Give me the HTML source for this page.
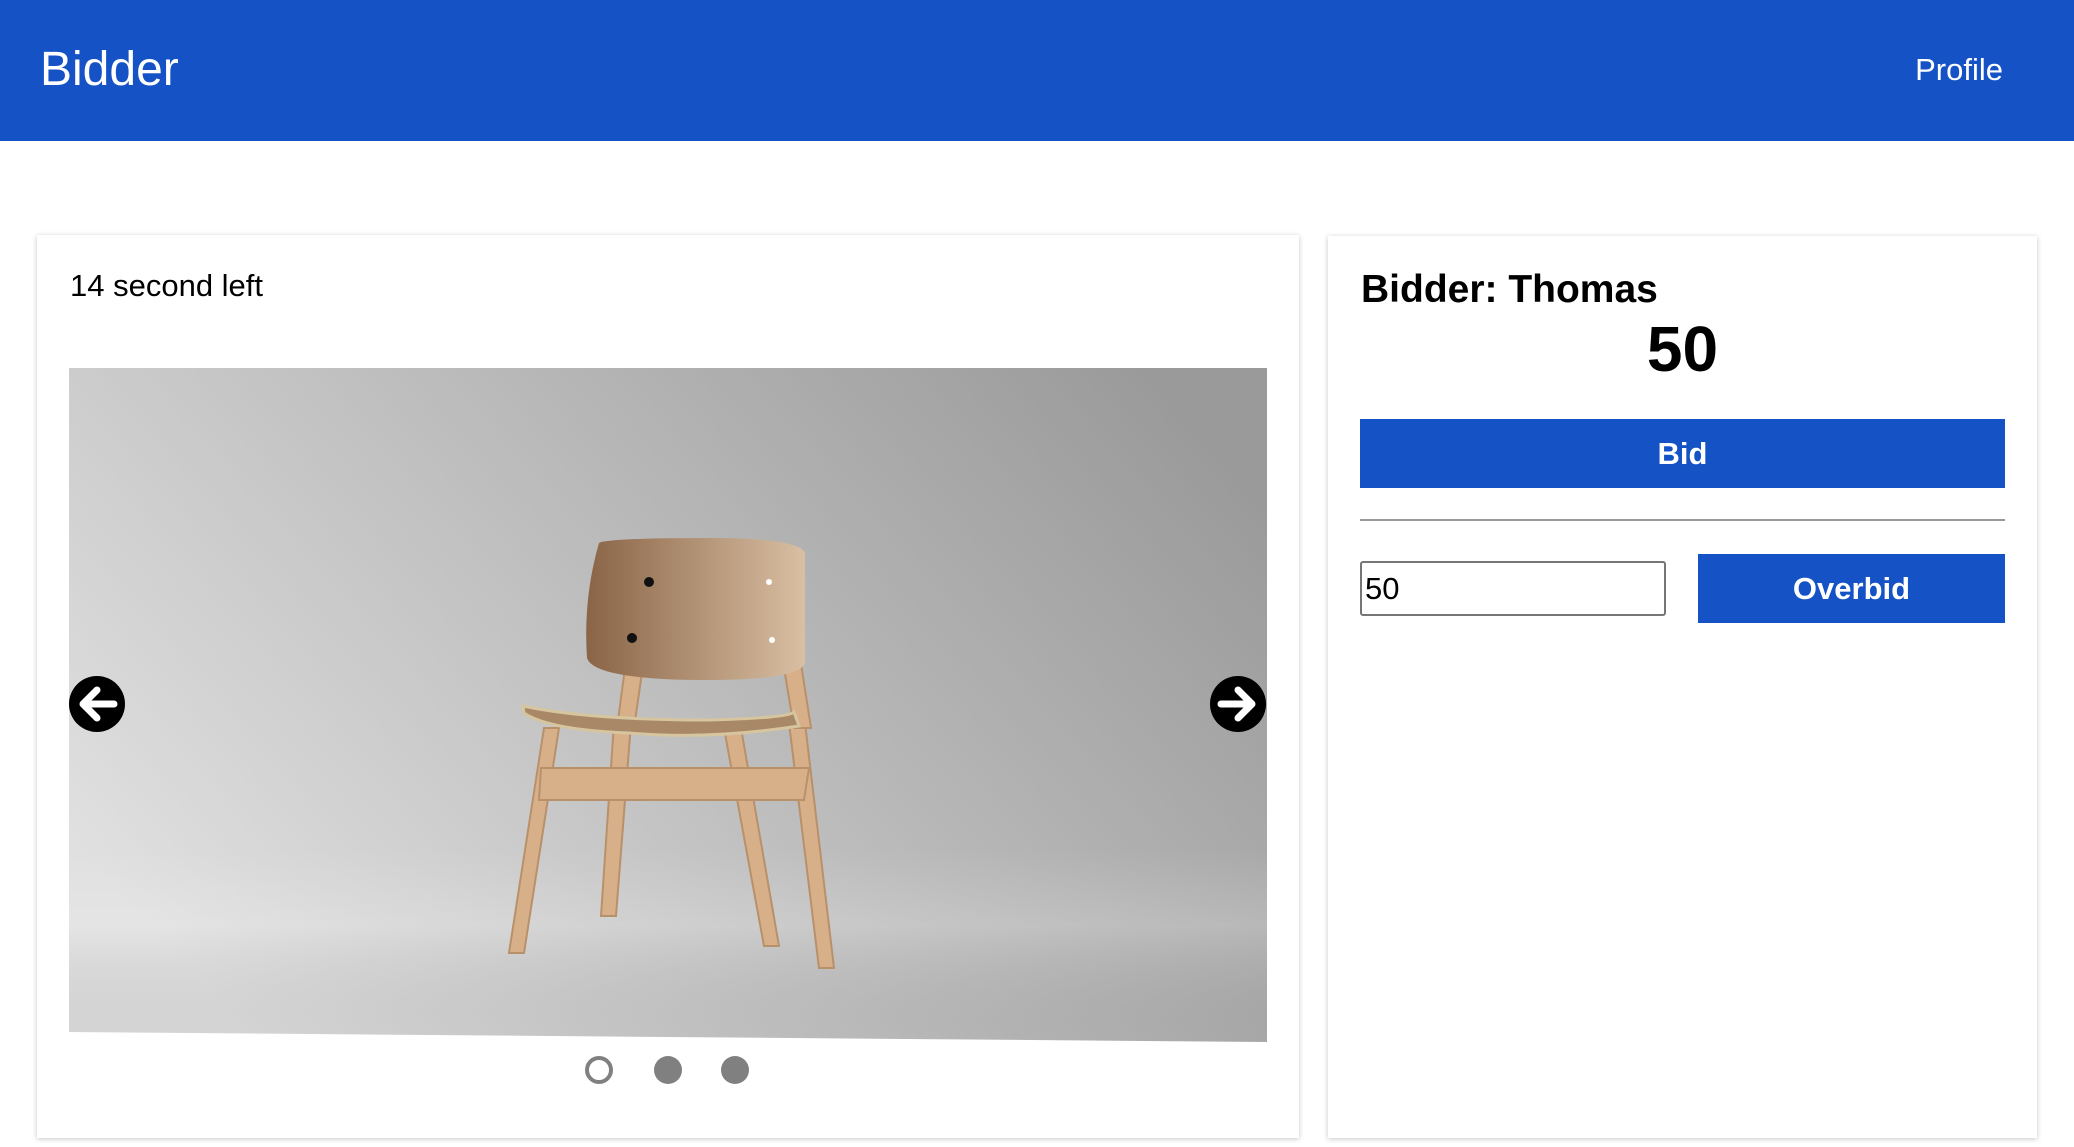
<!DOCTYPE html>
<html><head><style>
*{margin:0;padding:0;box-sizing:border-box}
body{width:2074px;height:1147px;background:#fff;font-family:"Liberation Sans",Arial,sans-serif;position:relative;overflow:hidden}
.hdr{position:absolute;left:0;top:0;width:2074px;height:141px;background:#1452c6;color:#fff}
.logo{position:absolute;left:40px;top:40px;font-size:48px;line-height:60px}
.prof{position:absolute;right:71px;top:50px;font-size:31px;line-height:40px}
.card{position:absolute;background:#fff;box-shadow:0 1px 5px rgba(0,0,0,.22)}
.abs{position:absolute}
.btn{position:absolute;background:#1452c6;color:#fff;font-weight:bold;font-size:31px;display:flex;align-items:center;justify-content:center}
</style></head><body>
<div class="hdr"><div class="logo">Bidder</div><div class="prof">Profile</div></div>

<div class="card" style="left:37px;top:235px;width:1262px;height:903px"></div>
<div class="abs" style="left:70px;top:268px;font-size:31px;line-height:36px">14 second left</div>
<svg class="abs" style="left:69px;top:368px" width="1198" height="674" viewBox="0 0 1198 674">
<defs>
<linearGradient id="bg" x1="0" y1="0.7" x2="1" y2="0.2"><stop offset="0" stop-color="#e0e0e0"/><stop offset="1" stop-color="#9a9a9a"/></linearGradient>
<linearGradient id="fl" x1="0" y1="0" x2="0" y2="1"><stop offset="0" stop-color="#fff" stop-opacity="0"/><stop offset="0.4" stop-color="#fff" stop-opacity="0.15"/><stop offset="1" stop-color="#000" stop-opacity="0.05"/></linearGradient>
<linearGradient id="wd" x1="0" y1="0" x2="1" y2="0"><stop offset="0" stop-color="#8a6446"/><stop offset="1" stop-color="#d9bfa3"/></linearGradient>
</defs>
<polygon points="0,0 1198,0 1198,674 0,664" fill="url(#bg)"/>
<polygon points="0,480 1198,480 1198,674 0,664" fill="url(#fl)"/>
<g fill="#d7b08a" stroke="#b8906a" stroke-width="2">
<polygon points="475,360 490,360 455,585 440,585"/>
<polygon points="655,360 672,360 710,578 695,578"/>
<polygon points="545,355 562,355 547,548 532,548"/>
<polygon points="720,355 736,355 765,600 750,600"/>
<polygon points="472,400 740,400 735,432 470,432"/>
<polygon points="560,270 578,270 565,360 548,360"/>
<polygon points="710,270 728,270 742,360 725,360"/>
</g>
<path d="M454,338 Q520,352 640,352 Q720,350 725,344 L730,358 Q640,372 560,365 Q480,362 455,345Z" fill="#a88867" stroke="#d6c59e" stroke-width="3"/>
<path d="M530,175 Q540,170 640,170 Q730,170 736,185 L736,295 Q730,312 640,312 Q525,312 518,290 Q514,230 530,175Z" fill="url(#wd)"/>
<circle cx="580" cy="214" r="5" fill="#111"/><circle cx="563" cy="270" r="5" fill="#111"/>
<circle cx="700" cy="214" r="3" fill="#fff"/><circle cx="703" cy="272" r="3" fill="#fff"/>
<circle cx="28" cy="336" r="28" fill="#000"/>
<path d="M45,336 H16 M28,322 L14,336 L28,350" stroke="#fff" stroke-width="7" fill="none" stroke-linecap="round" stroke-linejoin="round"/>
<circle cx="1169" cy="336" r="28" fill="#000"/>
<path d="M1152,336 H1181 M1169,322 L1183,336 L1169,350" stroke="#fff" stroke-width="7" fill="none" stroke-linecap="round" stroke-linejoin="round"/>
</svg>
<svg class="abs" style="left:580px;top:1052px" width="180" height="36">
<circle cx="19" cy="18" r="12" fill="none" stroke="#808080" stroke-width="4"/>
<circle cx="88" cy="18" r="14" fill="#808080"/>
<circle cx="155" cy="18" r="14" fill="#808080"/>
</svg>

<div class="card" style="left:1328px;top:236px;width:709px;height:902px"></div>
<div class="abs" style="left:1361px;top:267px;font-size:39px;font-weight:bold;line-height:46px">Bidder: Thomas</div>
<div class="abs" style="left:1360px;width:645px;top:312px;text-align:center;font-size:64px;font-weight:bold;line-height:74px">50</div>
<div class="btn" style="left:1360px;top:419px;width:645px;height:69px">Bid</div>
<div class="abs" style="left:1360px;top:519px;width:645px;height:2px;background:#999"></div>
<div class="abs" style="left:1360px;top:561px;width:306px;height:55px;border:2px solid #767676;border-radius:3px;font-size:31px;line-height:51px;padding-left:3px">50</div>
<div class="btn" style="left:1698px;top:554px;width:307px;height:69px">Overbid</div>
</body></html>
